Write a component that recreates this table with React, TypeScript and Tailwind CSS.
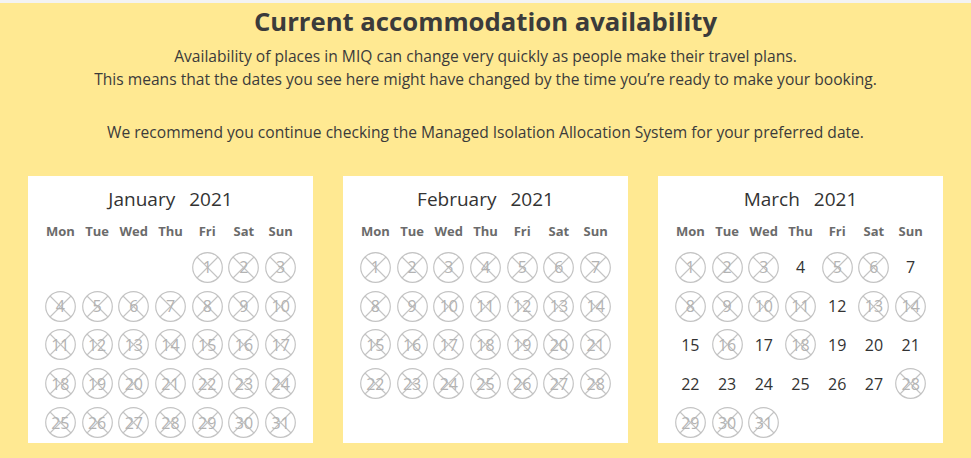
const days = ["Mon", "Tue", "Wed", "Thu", "Fri", "Sat", "Sun"];

const months = [
  { name: "January", offset: 4, count: 31, open: [] as number[] },
  { name: "February", offset: 0, count: 28, open: [] as number[] },
  { name: "March", offset: 0, count: 31, open: [4, 7, 12, 15, 17, 19, 20, 21, 22, 23, 24, 25, 26, 27] },
];

function Crossed({ n }: { n: number }) {
  return (
    <div className="relative w-[31px] h-[31px] flex items-center justify-center">
      <svg className="absolute inset-0" width="31" height="31" viewBox="0 0 31 31">
        <circle cx="15.5" cy="15.5" r="14.8" fill="none" stroke="#c4c4c4" strokeWidth="1.2" />
        <line x1="5" y1="5" x2="26" y2="26" stroke="#c4c4c4" strokeWidth="1.1" />
        <line x1="26" y1="5" x2="5" y2="26" stroke="#c4c4c4" strokeWidth="1.1" />
      </svg>
      <span className="relative text-[#b3b3b3]">{n}</span>
    </div>
  );
}

function Month({ m }: { m: (typeof months)[number] }) {
  const cells: (number | null)[] = [];
  for (let i = 0; i < m.offset; i++) cells.push(null);
  for (let d = 1; d <= m.count; d++) cells.push(d);
  return (
    <div className="bg-white pt-[11px] pb-[1px] px-[14px]">
      <div className="text-center text-[19px] text-[#333] leading-[24px]">
        {m.name}
        <span className="ml-[14px]">2021</span>
      </div>
      <div className="grid grid-cols-7 mt-[12px] text-[13px] font-bold text-[#6b6b6b] text-center leading-[16px]">
        {days.map((d) => (
          <div key={d}>{d}</div>
        ))}
      </div>
      <div className="grid grid-cols-7 mt-[9px] text-[16px]">
        {cells.map((d, i) => (
          <div key={i} className="h-[38.8px] flex items-center justify-center">
            {d === null ? null : m.open.includes(d) ? (
              <span className="text-[#333]">{d}</span>
            ) : (
              <Crossed n={d} />
            )}
          </div>
        ))}
      </div>
    </div>
  );
}

export default function App() {
  return (
    <div className="w-[971px] h-[458px] bg-[#ffe992] overflow-hidden" style={{ fontFamily: "'Open Sans', 'Liberation Sans', sans-serif" }}>
      <div className="h-[3px] bg-[#f3f3f3]" />
      <h1 className="text-center text-[25.7px] font-bold text-[#3b3b3b] leading-[34px] mt-[2px]">
        Current accommodation availability
      </h1>
      <div className="text-center text-[15.6px] text-[#3b3b3b] leading-[23px] mt-[6px]">
        <p>Availability of places in MIQ can change very quickly as people make their travel plans.</p>
        <p>This means that the dates you see here might have changed by the time you’re ready to make your booking.</p>
        <p className="mt-[30px]">We recommend you continue checking the Managed Isolation Allocation System for your preferred date.</p>
      </div>
      <div className="grid grid-cols-3 gap-[30px] px-[28px] mt-[32px]">
        {months.map((m) => (
          <Month key={m.name} m={m} />
        ))}
      </div>
    </div>
  );
}
